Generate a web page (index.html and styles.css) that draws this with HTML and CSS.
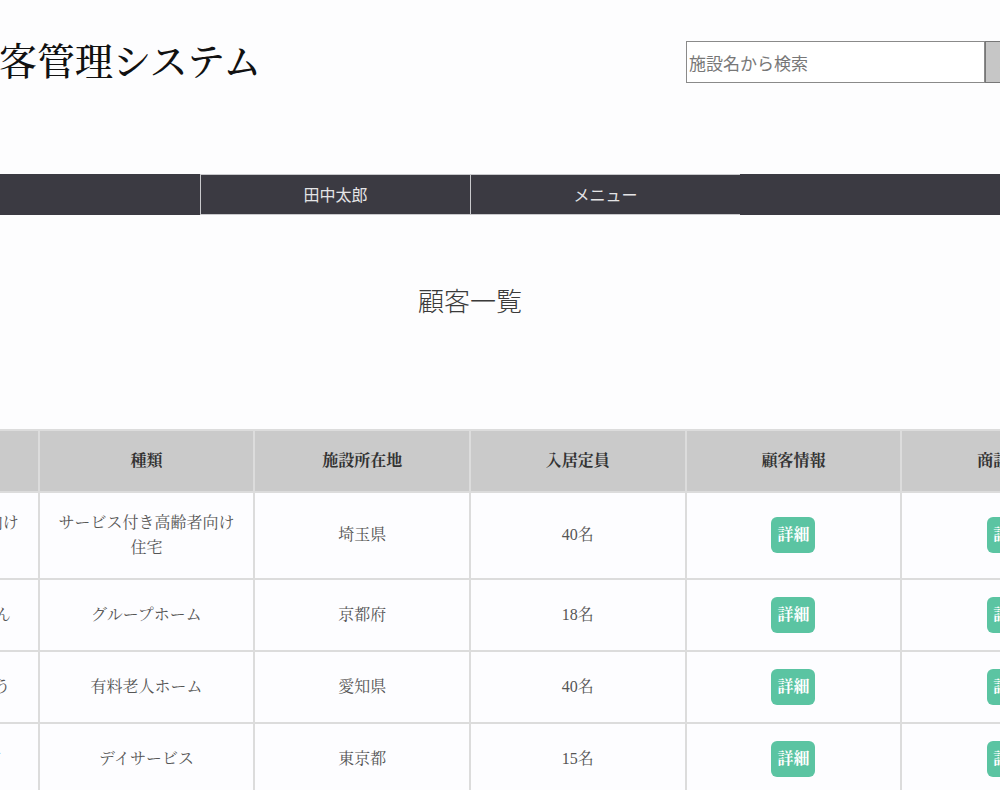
FILE: index.html
```html
<!DOCTYPE html>
<html lang="ja">
<head>
<meta charset="utf-8">
<title>顧客管理システム</title>
<link rel="stylesheet" href="styles.css">
</head>
<body>
<div class="page">
  <header class="site-header">
    <h1 class="site-title">顧客管理システム</h1>
    <form class="search">
      <input class="search-input" type="text" placeholder="施設名から検索">
      <button class="search-btn" type="button">検索</button>
    </form>
  </header>
  <nav class="global-nav">
    <ul class="nav-list">
      <li class="nav-item nav-blank"></li>
      <li class="nav-item">田中太郎</li>
      <li class="nav-item">メニュー</li>
      <li class="nav-item nav-blank"></li>
    </ul>
  </nav>
  <main class="content">
    <h2 class="page-title">顧客一覧</h2>
    <table class="client-table">
      <thead>
        <tr>
          <th>施設名</th>
          <th>種類</th>
          <th>施設所在地</th>
          <th>入居定員</th>
          <th>顧客情報</th>
          <th>商談履歴</th>
        </tr>
      </thead>
      <tbody>
        <tr>
          <td>みどりの丘の高齢者向け住宅</td>
          <td>サービス付き高齢者向け住宅</td>
          <td>埼玉県</td>
          <td>40名</td>
          <td><a class="detail-btn" href="#">詳細</a></td>
          <td><a class="detail-btn" href="#">詳細</a></td>
        </tr>
        <tr>
          <td>さくらホームあんしん</td>
          <td>グループホーム</td>
          <td>京都府</td>
          <td>18名</td>
          <td><a class="detail-btn" href="#">詳細</a></td>
          <td><a class="detail-btn" href="#">詳細</a></td>
        </tr>
        <tr>
          <td>ライフホームゆうゆう</td>
          <td>有料老人ホーム</td>
          <td>愛知県</td>
          <td>40名</td>
          <td><a class="detail-btn" href="#">詳細</a></td>
          <td><a class="detail-btn" href="#">詳細</a></td>
        </tr>
        <tr>
          <td>ひまわり苑デイケア</td>
          <td>デイサービス</td>
          <td>東京都</td>
          <td>15名</td>
          <td><a class="detail-btn" href="#">詳細</a></td>
          <td><a class="detail-btn" href="#">詳細</a></td>
        </tr>
      </tbody>
    </table>
  </main>
</div>
</body>
</html>
```

FILE: styles.css
```css
html, body {
  margin: 0;
  padding: 0;
  background: #fdfdfe;
  overflow: hidden;
}

body {
  font-family: "Liberation Serif", "Noto Serif CJK JP", serif;
  color: #555;
}

.page {
  width: 1296px;
  margin-left: -178px;
}

.site-header {
  display: flex;
  align-items: center;
  padding: 41px 73px 0 139px;
}

.site-title {
  margin: 0;
  font-size: 38px;
  line-height: 42px;
  font-weight: 500;
  color: #111;
}

.search {
  display: flex;
  margin-left: auto;
}

.search-input {
  box-sizing: border-box;
  width: 299px;
  height: 42px;
  margin: 0;
  padding: 0 2px;
  border: 1px solid #8a8a8a;
  font-family: "Noto Sans CJK JP", sans-serif;
  font-size: 17px;
  color: #333;
  background: #fff;
}

.search-input::placeholder {
  color: #777;
}

.search-btn {
  box-sizing: border-box;
  width: 60px;
  height: 42px;
  margin: 0;
  border: 1px solid #777;
  background: #c6c6c6;
  font-family: "Noto Sans CJK JP", sans-serif;
  font-size: 15px;
  color: #333;
}

.global-nav {
  margin-top: 91px;
  background: #3b3a42;
}

.nav-list {
  display: flex;
  justify-content: center;
  margin: 0;
  padding: 0;
  list-style: none;
}

.nav-item {
  box-sizing: border-box;
  width: 271px;
  height: 41px;
  line-height: 39px;
  border: 1px solid #c9c9cc;
  text-align: center;
  font-family: "Noto Sans CJK JP", sans-serif;
  font-size: 16px;
  color: #e4e4e6;
}

.nav-item + .nav-item {
  margin-left: -1px;
}

.nav-blank {
  border-color: #3b3a42;
}

.nav-blank + .nav-item {
  margin-left: 0;
}

.content {
  padding-top: 65px;
}

.page-title {
  margin: 0 0 110px;
  text-align: center;
  font-family: "Noto Sans CJK JP", sans-serif;
  font-weight: 300;
  font-size: 26px;
  line-height: 39px;
  color: #3a3a3a;
}

.client-table {
  width: 1296px;
  table-layout: fixed;
  border-collapse: collapse;
  background: #fdfdff;
}

.client-table th,
.client-table td {
  padding: 17px 17px;
  border: 2px solid #dcdcdc;
  text-align: center;
  font-size: 16px;
  line-height: 1.6;
}

.client-table th {
  background: #cacaca;
  color: #333;
  font-weight: bold;
  border-color: #dcdcdc;
}

.client-table td {
  color: #555;
}

.detail-btn {
  display: inline-block;
  padding: 5px 6px;
  line-height: 26px;
  border-radius: 6px;
  background: #5bc4a2;
  color: #fff;
  font-weight: bold;
  font-size: 16px;
  text-decoration: none;
  vertical-align: middle;
}
```
